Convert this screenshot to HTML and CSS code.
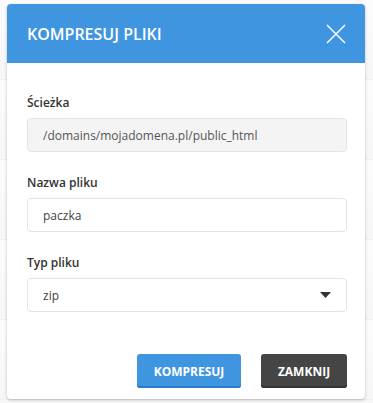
FILE: index.html
```html
<!DOCTYPE html>
<html lang="pl">
<head>
<meta charset="utf-8">
<title>Kompresuj pliki</title>
<link rel="stylesheet" href="styles.css">
</head>
<body>
<div class="page">
  <div class="bg-rows">
    <div class="bg-row"></div><div class="bg-row"></div><div class="bg-row"></div><div class="bg-row"></div><div class="bg-row"></div>
  </div>
  <div class="modal">
    <div class="modal-header">
      <h1 class="modal-title">KOMPRESUJ PLIKI</h1>
      <button class="close-btn" aria-label="Zamknij">
        <svg width="20" height="20" viewBox="0 0 20 20"><path d="M1 1 L19 19 M19 1 L1 19" stroke="#fff" stroke-width="1.5" fill="none"/></svg>
      </button>
    </div>
    <div class="modal-body">
      <div class="field">
        <label class="field-label">Ścieżka</label>
        <div class="input input-disabled">/domains/mojadomena.pl/public_html</div>
      </div>
      <div class="field">
        <label class="field-label">Nazwa pliku</label>
        <div class="input">paczka</div>
      </div>
      <div class="field">
        <label class="field-label">Typ pliku</label>
        <div class="input select">
          <span>zip</span>
          <svg class="caret" width="11" height="6" viewBox="0 0 11 6"><path d="M0 0 H11 L5.5 6 Z" fill="#333"/></svg>
        </div>
      </div>
    </div>
    <div class="modal-footer">
      <button class="btn btn-primary">KOMPRESUJ</button>
      <button class="btn btn-dark">ZAMKNIJ</button>
    </div>
  </div>
</div>
</body>
</html>
```
FILE: styles.css
```css
* { box-sizing: border-box; }
html, body { margin: 0; padding: 0; }
body {
  font-family: "Open Sans", "Liberation Sans", sans-serif;
  background: #f7f7f8;
  width: 373px;
  height: 403px;
  overflow: hidden;
}
.page {
  position: relative;
  padding: 4px 8px 0 7px;
  height: 403px;
}
.bg-rows {
  position: absolute;
  inset: 0;
  display: flex;
  flex-direction: column;
}
.bg-row {
  height: 80px;
  border-bottom: 1px solid #efeff1;
  background: linear-gradient(#fcfcfd, #f6f6f7);
}
.modal {
  position: relative;
  background: #fff;
  border-radius: 4px;
  box-shadow: 0 1px 3px rgba(0,0,0,0.25);
  height: 395px;
  display: flex;
  flex-direction: column;
  overflow: hidden;
}
.modal-header {
  background: #3f95df;
  height: 59px;
  display: flex;
  align-items: center;
  justify-content: space-between;
  padding: 0 19px 0 20px;
}
.modal-title {
  margin: 0;
  color: #fff;
  font-size: 16px;
  font-weight: 600;
  letter-spacing: 0;
}
.close-btn {
  background: none;
  border: 0;
  padding: 0;
  width: 20px;
  height: 20px;
  display: flex;
}
.modal-body {
  padding: 31px 18px 0 20px;
  display: flex;
  flex-direction: column;
  gap: 22px;
}
.field {
  display: flex;
  flex-direction: column;
  gap: 6px;
}
.field-label {
  font-size: 12px;
  line-height: 18px;
  font-weight: 600;
  color: #333;
}
.input {
  height: 34px;
  border: 1px solid #e3e3e5;
  border-radius: 4px;
  padding: 0 15px;
  display: flex;
  align-items: center;
  font-size: 12px;
  color: #444;
  background: #fff;
}
.input-disabled {
  background: #f4f4f5;
  color: #555;
}
.select {
  justify-content: space-between;
  padding-right: 15px;
}
.modal-footer {
  margin-top: auto;
  padding: 0 18px 11px 20px;
  display: flex;
  justify-content: flex-end;
  gap: 20px;
}
.btn {
  height: 34px;
  border: 0;
  border-radius: 3px;
  color: #fff;
  font-family: inherit;
  font-size: 12px;
  font-weight: 700;
  padding: 0;
}
.btn-primary {
  width: 104px;
  background: #3f95df;
  box-shadow: inset 0 -2px 0 #2d7ccc;
}
.btn-dark {
  width: 86px;
  background: #454545;
  box-shadow: inset 0 -2px 0 #333;
}
```
